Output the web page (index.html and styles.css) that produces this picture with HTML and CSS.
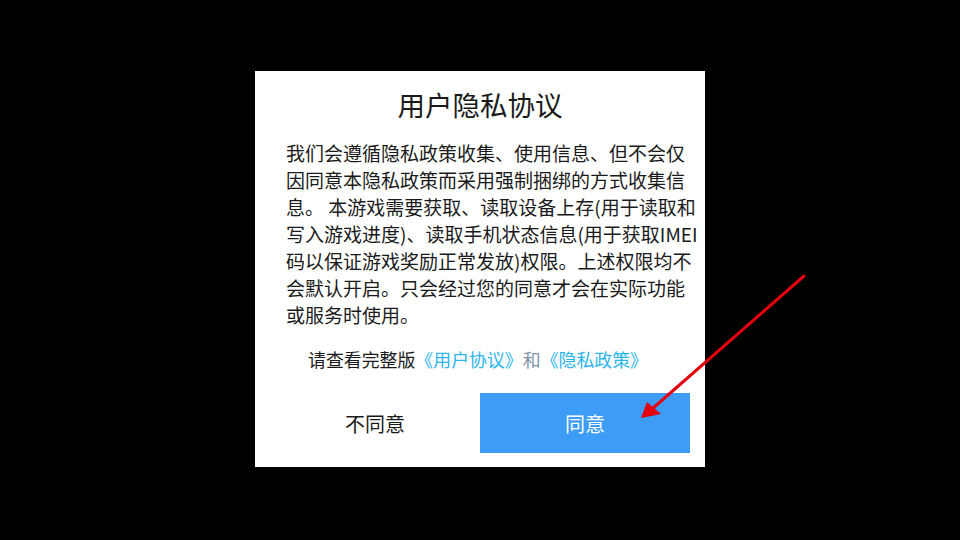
FILE: index.html
```html
<!DOCTYPE html>
<html lang="zh">
<head>
<meta charset="utf-8">
<link rel="stylesheet" href="styles.css">
</head>
<body>
<div class="stage">
  <div class="dialog">
    <h1 class="title">用户隐私协议</h1>
    <p class="body">我们会遵循隐私政策收集、使用信息、但不会仅<br>因同意本隐私政策而采用强制捆绑的方式收集信<br>息。 本游戏需要获取、读取设备上存(用于读取和<br>写入游戏进度)、读取手机状态信息(用于获取IMEI<br>码以保证游戏奖励正常发放)权限。上述权限均不<br>会默认开启。只会经过您的同意才会在实际功能<br>或服务时使用。</p>
    <p class="links">请查看完整版<span class="link">《用户协议》</span><span class="and">和</span><span class="link">《隐私政策》</span></p>
    <div class="actions">
      <div class="btn btn-no">不同意</div>
      <div class="btn btn-yes">同意</div>
    </div>
  </div>
</div>
<svg class="arrow" width="960" height="540" viewBox="0 0 960 540">
  <line x1="804" y1="276" x2="652" y2="409" stroke="#e4000f" stroke-width="3" stroke-linecap="round"/>
  <polygon points="641,418 647,402 661,414" fill="#e4000f"/>
</svg>
</body>
</html>
```

FILE: styles.css
```css
html, body {
  margin: 0;
  padding: 0;
  background: #000;
  width: 960px;
  height: 540px;
  overflow: hidden;
  font-family: "Noto Sans CJK SC", "Noto Sans", sans-serif;
}
.stage {
  display: flex;
  justify-content: center;
  padding-top: 71px;
}
.dialog {
  width: 450px;
  height: 396px;
  background: #fff;
  box-sizing: border-box;
  padding: 16px 15px 14px 15px;
  display: flex;
  flex-direction: column;
}
.title {
  margin: 0;
  font-size: 27.5px;
  line-height: 35px;
  font-weight: 400;
  color: #1a1a1a;
  text-align: center;
}
.body {
  margin: 17px 0 0 0;
  padding: 0 4px 0 16px;
  font-size: 19px;
  line-height: 27px;
  color: #1a1a1a;
  white-space: nowrap;
}
.links {
  margin: 19px 0 0 0;
  padding-right: 4px;
  font-size: 17.9px;
  line-height: 24px;
  color: #1a1a1a;
  text-align: center;
  white-space: nowrap;
}
.link {
  color: #2bb5ee;
}
.and {
  color: #7f97ab;
}
.actions {
  margin-top: 22px;
  display: flex;
}
.btn {
  flex: 1;
  height: 60px;
  display: flex;
  align-items: center;
  justify-content: center;
  font-size: 20px;
}
.btn-no {
  color: #1a1a1a;
}
.btn-yes {
  background: #3d9cf6;
  color: #fff;
}
.arrow {
  position: absolute;
  left: 0;
  top: 0;
}
```
